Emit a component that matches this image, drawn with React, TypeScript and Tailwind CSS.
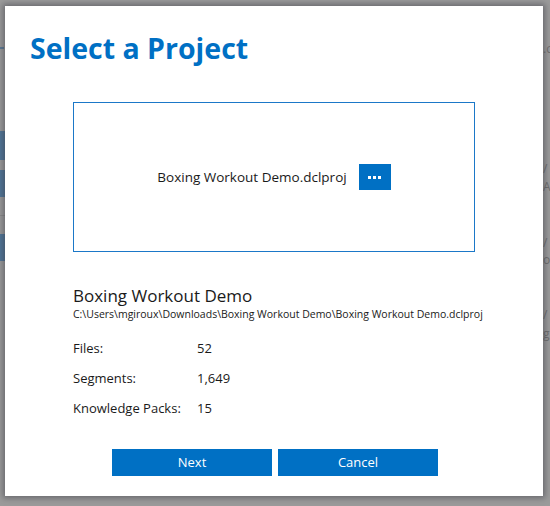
import React from "react";

export default function App() {
  const font = { fontFamily: '"Open Sans", "Noto Sans", Arial, sans-serif' };
  return (
    <div className="relative w-[550px] h-[506px] overflow-hidden bg-[#9b9b9b]" style={font}>
      {/* background remnants */}
      <div className="absolute left-0 top-[47px] w-[4px] h-[2px] bg-[#5a7a95]" />
      <div className="absolute left-0 top-[131px] w-[6px] h-[29px] bg-[#4f7597]" />
      <div className="absolute left-0 top-[170px] w-[6px] h-[27px] bg-[#4f7597]" />
      <div className="absolute left-0 top-[215px] w-[6px] h-px bg-[#8a8a8a]" />
      <div className="absolute left-0 top-[234px] w-[6px] h-[27px] bg-[#4f7597]" />
      <div className="absolute left-[543px] top-[43px] text-[12px] text-[#6e6e6e] leading-[12px]">.c</div>
      <div className="absolute left-[543px] top-[163px] text-[12px] text-[#6e6e6e] leading-[12px]">/</div>
      <div className="absolute left-[543px] top-[181px] text-[12px] text-[#6e6e6e] leading-[12px]">A</div>
      <div className="absolute left-[543px] top-[237px] text-[12px] text-[#6e6e6e] leading-[12px]">/</div>
      <div className="absolute left-[543px] top-[254px] text-[12px] text-[#6e6e6e] leading-[12px]">or</div>
      <div className="absolute left-[543px] top-[309px] text-[12px] text-[#6e6e6e] leading-[12px]">/</div>
      <div className="absolute left-[543px] top-[328px] text-[12px] text-[#6e6e6e] leading-[12px]">g</div>

      {/* dialog */}
      <div className="absolute left-[5px] top-[6px] w-[538px] h-[490px] bg-white shadow-[0_0_6px_2px_rgba(60,60,70,0.55)] flex flex-col">
        <h1 className="ml-[25px] mt-[23px] text-[28.5px] leading-[38px] font-bold text-[#0070c4]">
          Select a Project
        </h1>
        <div className="ml-[68px] mt-[35px] w-[402px] h-[150px] border border-[#1b78c8] flex items-center justify-center gap-[12px]">
          <span className="text-[13.5px] text-[#1a1a1a]">Boxing Workout Demo.dclproj</span>
          <button className="w-[32px] h-[26px] bg-[#0070c4] flex items-center justify-center gap-[2px]">
            <span className="w-[3px] h-[3px] bg-white" />
            <span className="w-[3px] h-[3px] bg-white" />
            <span className="w-[3px] h-[3px] bg-white" />
          </button>
        </div>
        <div className="ml-[68px] mt-[33px] flex flex-col">
          <div className="text-[17px] leading-[22px] text-[#1a1a1a]">Boxing Workout Demo</div>
          <div className="text-[10.5px] leading-[14px] text-[#1a1a1a]">
            C:\Users\mgiroux\Downloads\Boxing Workout Demo\Boxing Workout Demo.dclproj
          </div>
          <div className="mt-[18px] flex flex-col gap-[10px] text-[13px] text-[#1a1a1a]">
            <div className="flex h-[20px] items-center"><span className="w-[124px]">Files:</span><span>52</span></div>
            <div className="flex h-[20px] items-center"><span className="w-[124px]">Segments:</span><span>1,649</span></div>
            <div className="flex h-[20px] items-center"><span className="w-[124px]">Knowledge Packs:</span><span>15</span></div>
          </div>
        </div>
        <div className="mt-auto mb-[20px] pl-[2px] flex justify-center gap-[6px]">
          <button className="w-[160px] h-[27px] bg-[#0070c4] text-white text-[13px]">Next</button>
          <button className="w-[160px] h-[27px] bg-[#0070c4] text-white text-[13px]">Cancel</button>
        </div>
      </div>
    </div>
  );
}
